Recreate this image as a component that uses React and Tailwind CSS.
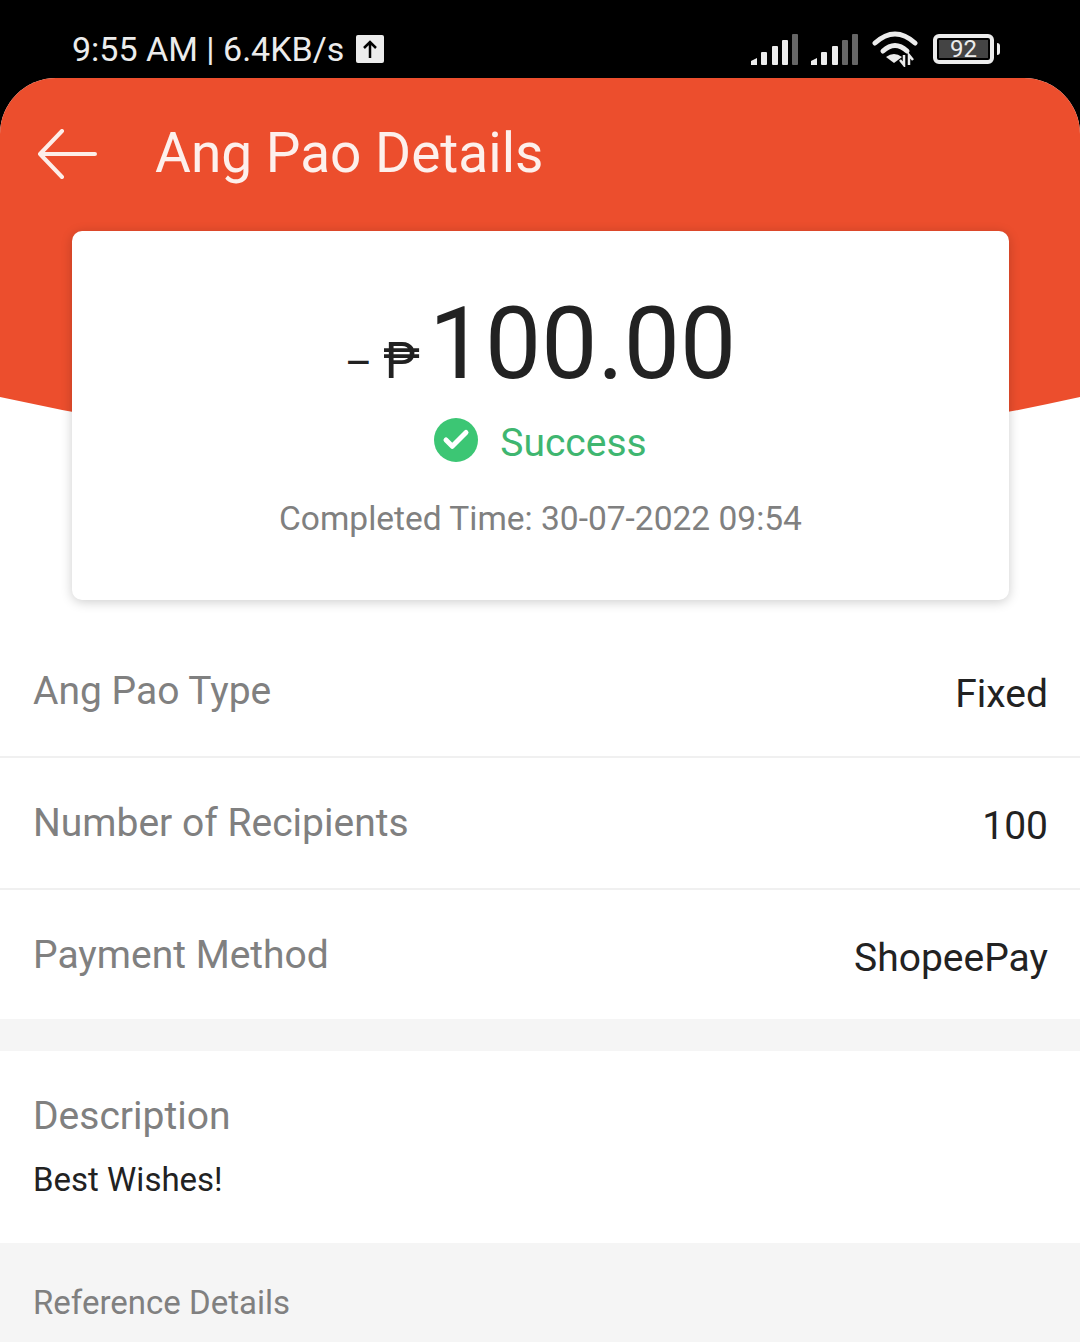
import { Check } from 'lucide-react';

const rows = [
  { label: 'Ang Pao Type', value: 'Fixed', height: 'h-[132px]' },
  { label: 'Number of Recipients', value: '100', height: 'h-[132px]' },
  { label: 'Payment Method', value: 'ShopeePay', height: 'h-[129px] pt-[2px]' },
];

const Signal = ({ weak }) => (
  <svg width="48" height="32" viewBox="0 0 48 32">
    <path d="M0 32v-4l6-3v7z" fill="#ececec" />
    <rect x="10" y="19" width="6" height="13" rx="1" fill="#ececec" />
    <rect x="21" y="13" width="6" height="19" rx="1" fill="#ececec" />
    <rect x="31" y="7" width="6" height="25" rx="1" fill={weak ? '#666666' : '#ececec'} />
    <rect x="41" y="1" width="6" height="31" rx="1" fill="#666666" />
  </svg>
);

const Wifi = () => (
  <svg width="46" height="36" viewBox="0 0 46 36" fill="none" stroke="#ececec" strokeWidth="5" strokeLinecap="round">
    <path d="M3 12Q23 -6 43 12" />
    <path d="M11 20Q23 9 35 20" />
    <path d="M22 32l-8-6Q22 20 30 26z" fill="#ececec" stroke="none" />
    <path d="M28 29l4 5V24M37 34V24l4 5" strokeWidth="2.5" strokeLinecap="butt" />
  </svg>
);

const Battery = () => (
  <div className="flex items-center">
    <div className="flex h-[30px] w-[61px] items-center justify-center rounded-[6px] border-[4px] border-[#ececec] bg-black px-[2px]">
      <div className="flex h-[18px] w-full items-center justify-center bg-[#444444] text-[24px] leading-none text-[#ececec]">
        92
      </div>
    </div>
    <div className="ml-[3px] h-[12px] w-[3px] rounded-r-sm bg-[#ececec]" />
  </div>
);

export default function App() {
  return (
    <div className="h-[1342px] w-full overflow-hidden bg-black font-['Roboto',sans-serif]">
      <div className="flex h-[78px] items-center justify-between pl-[72px] pr-[80px] pt-[20px] text-[#ececec]">
        <div className="flex items-center gap-[12px] text-[34px] leading-none">
          <span>9:55 AM | 6.4KB/s</span>
          <div className="flex h-[28px] w-[28px] items-center justify-center rounded-[2px] bg-[#ececec]">
            <svg width="16" height="18" viewBox="0 0 16 18" fill="none" stroke="#000" strokeWidth="2.5">
              <path d="M8 18V2M2 8l6-6 6 6" />
            </svg>
          </div>
        </div>
        <div className="flex items-center">
          <Signal />
          <div className="ml-[12px]"><Signal weak /></div>
          <div className="ml-[13px]"><Wifi /></div>
          <div className="ml-[15px]"><Battery /></div>
        </div>
      </div>

      <div className="relative h-[1264px] overflow-hidden rounded-t-[56px] bg-white">
        <svg className="absolute left-0 top-0" width="1080" height="400" viewBox="0 0 1080 400">
          <path d="M0 0H1080V319Q540 439 0 319Z" fill="#ec4e2d" />
        </svg>

        <div className="relative flex h-[153px] items-center pb-[2px] pl-[37px]">
          <svg width="60" height="50" viewBox="0 0 60 50" fill="none" stroke="#fdeee9" strokeWidth="4" strokeLinecap="round" strokeLinejoin="round">
            <path d="M58 25H3M25 2L3 25l22 23" />
          </svg>
          <h1 className="ml-[58px] text-[55px] font-normal leading-none text-[#fdf0ec]">Ang Pao Details</h1>
        </div>

        <div className="relative ml-[72px] mr-[71px] flex h-[369px] flex-col items-center rounded-[10px] bg-white shadow-[0_2px_12px_rgba(0,0,0,0.2)]">
          <div className="mt-[60px] flex items-baseline text-[#222222]">
            <span className="text-[42px] leading-none">–</span>
            <span className="ml-[11px] text-[50px] leading-none">₱</span>
            <span className="ml-[9px] text-[100px] leading-[106px]">100.00</span>
          </div>
          <div className="mt-[19px] flex items-center gap-[22px]">
            <div className="flex h-[44px] w-[44px] items-center justify-center rounded-full bg-[#3cc674]">
              <Check size={30} color="#ffffff" strokeWidth={4} />
            </div>
            <span className="pt-[8px] text-[39px] leading-none text-[#3fb670]">Success</span>
          </div>
          <p className="mt-[39px] text-[33.5px] leading-none text-[#808080]">Completed Time: 30-07-2022 09:54</p>
        </div>

        <div className="relative mt-[26px]">
          {rows.map((row, i) => (
            <div
              key={row.label}
              className={`flex items-center justify-between pl-[33px] pr-[32px] ${row.height} ${i < 2 ? 'border-b-[2px] border-[#f0f0f0]' : ''}`}
            >
              <span className="text-[39px] leading-none text-[#808080]">{row.label}</span>
              <span className="pt-[6px] text-[39px] leading-none text-[#222222]">{row.value}</span>
            </div>
          ))}
        </div>

        <div className="h-[32px] bg-[#f5f5f5]" />

        <div className="h-[192px] bg-white pl-[33px] pt-[46px]">
          <p className="text-[39px] leading-none text-[#808080]">Description</p>
          <p className="mt-[27px] text-[33px] leading-none text-[#222222]">Best Wishes!</p>
        </div>

        <div className="h-[99px] bg-[#f5f5f5] pl-[33px] pt-[43px]">
          <p className="text-[33px] leading-none text-[#808080]">Reference Details</p>
        </div>
      </div>
    </div>
  );
}
